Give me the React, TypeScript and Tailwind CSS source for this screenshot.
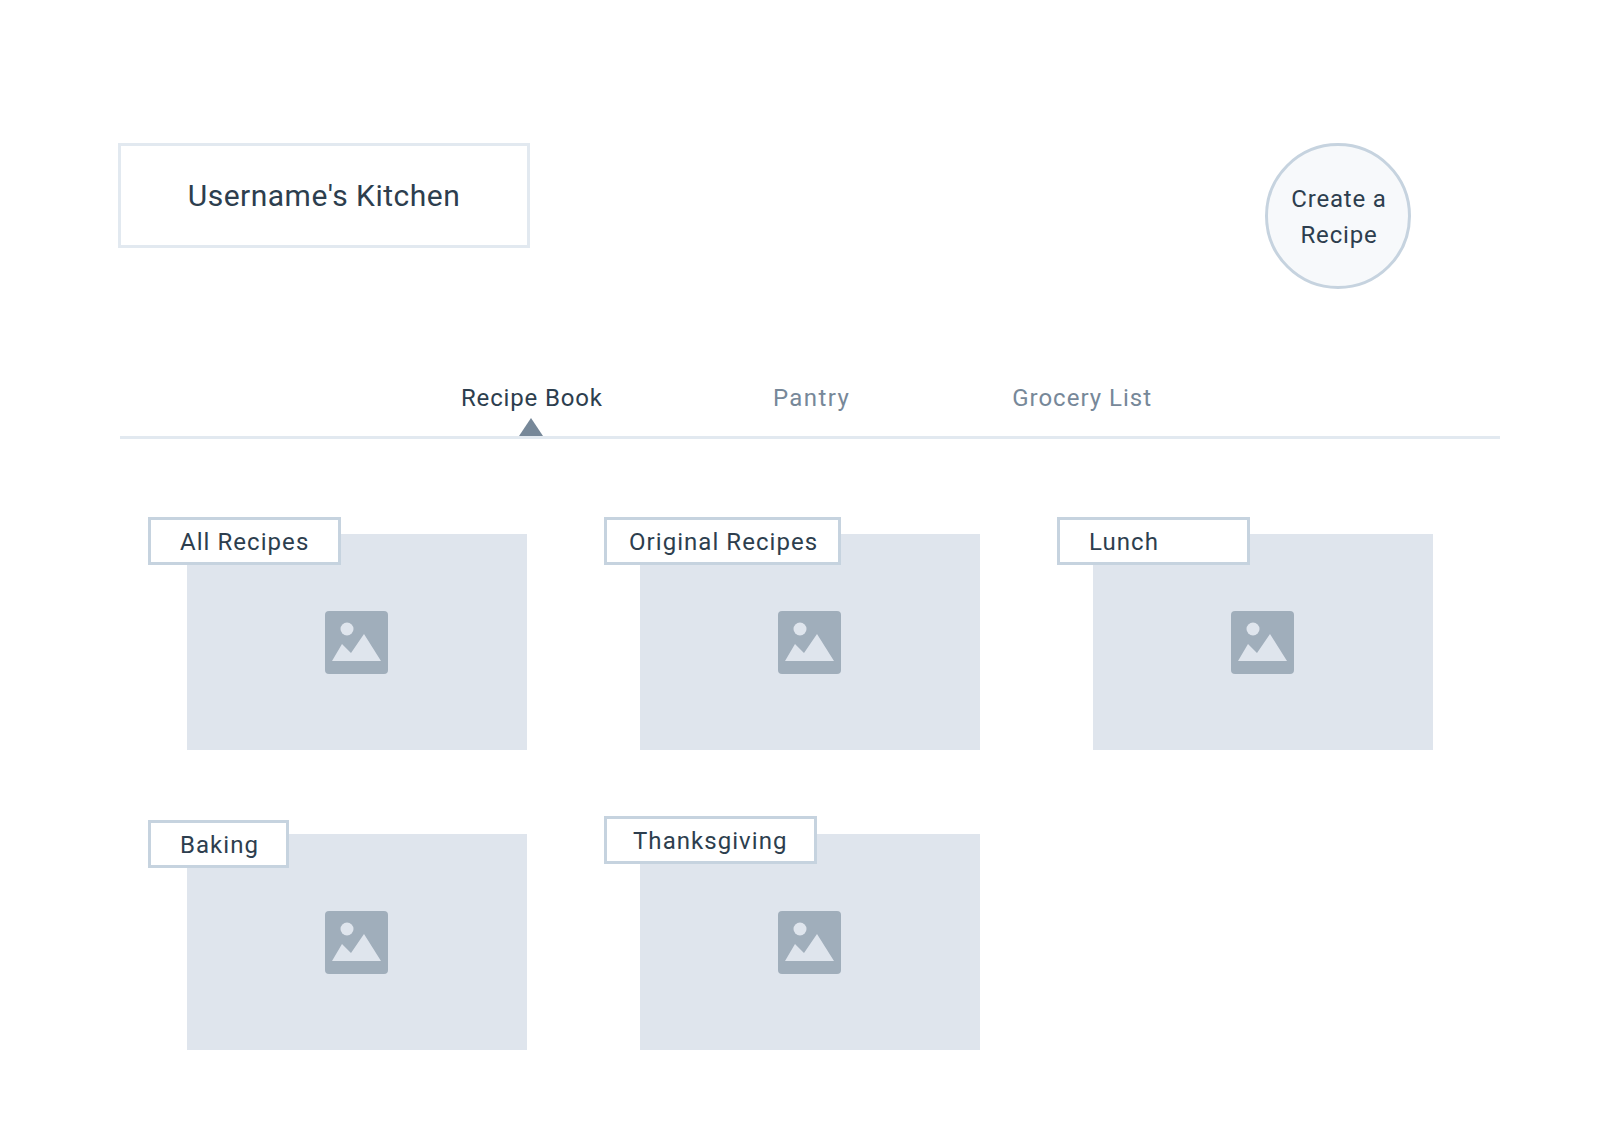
const cards = [
  { name: 'All Recipes', labelClass: 'left-[-39px] top-[-17px] w-[193px] h-[48px] pl-[29px]' },
  { name: 'Original Recipes', labelClass: 'left-[-36px] top-[-17px] w-[237px] h-[48px] pl-[22px]' },
  { name: 'Lunch', labelClass: 'left-[-36px] top-[-17px] w-[193px] h-[48px] pl-[29px]' },
  { name: 'Baking', labelClass: 'left-[-39px] top-[-14px] w-[141px] h-[48px] pl-[29px]' },
  { name: 'Thanksgiving', labelClass: 'left-[-36px] top-[-18px] w-[213px] h-[48px] pl-[26px]' },
];

function ImageIcon() {
  return (
    <svg width="63" height="63" viewBox="0 0 63 63">
      <rect width="63" height="63" rx="4" fill="#a0aebb" />
      <circle cx="22" cy="18" r="6.5" fill="#dfe5ed" />
      <path d="M7 50 L17 33 L26 42 L39 23 L56 50 Z" fill="#dfe5ed" />
    </svg>
  );
}

function Card({ name, labelClass }: { name: string; labelClass: string }) {
  return (
    <div className="relative h-[216px] bg-[#dfe5ed] flex items-center justify-center pr-[2px]">
      <ImageIcon />
      <div className={`absolute flex items-center bg-white border-[3px] border-[#c6d3df] pt-[1px] text-[24px] tracking-[1.05px] text-[#2d3e4e] ${labelClass}`}>
        {name}
      </div>
    </div>
  );
}

export default function App() {
  return (
    <div className="min-h-[1134px] bg-white pt-[143px] pl-[118px] font-['Roboto',sans-serif]">
      <header className="flex items-start">
        <div className="w-[412px] h-[105px] border-[3px] border-[#e2e9f0] flex items-center justify-center text-[30px] tracking-[0.5px] text-[#2d3e4e]">
          Username's Kitchen
        </div>
        <button className="ml-[735px] w-[146px] h-[146px] pt-[2px] pl-[2px] rounded-full border-[3px] border-[#c6d3df] bg-[#f7f9fb] text-[24px] leading-[36px] tracking-[0.8px] text-[#2d3e4e]">
          Create a<br />Recipe
        </button>
      </header>

      <nav className="mt-[91px] ml-[2px] w-[1380px] h-[59px] pr-[7px] border-b-[3px] border-[#e2e9f0] flex justify-center text-[24px] tracking-[1px] text-[#778899]">
        <div className="relative tracking-[0.85px] text-[#2d3e4e]">
          Recipe Book
          <svg className="absolute left-[58px] bottom-0" width="24" height="18" viewBox="0 0 24 18">
            <path d="M12 0 L24 18 L0 18 Z" fill="#778899" />
          </svg>
        </div>
        <div className="ml-[170px] tracking-[1.4px]">Pantry</div>
        <div className="ml-[162px]">Grocery List</div>
      </nav>

      <main className="mt-[95px] ml-[69px] grid grid-cols-[340px_340px_340px] gap-x-[113px] gap-y-[84px]">
        {cards.map((card) => (
          <Card key={card.name} {...card} />
        ))}
      </main>
    </div>
  );
}
